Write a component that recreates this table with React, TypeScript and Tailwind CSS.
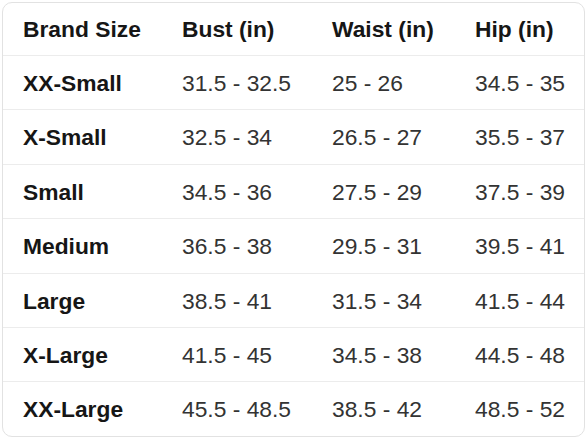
const headers = ["Brand Size", "Bust (in)", "Waist (in)", "Hip (in)"]

const rows = [
  ["XX-Small", "31.5 - 32.5", "25 - 26", "34.5 - 35"],
  ["X-Small", "32.5 - 34", "26.5 - 27", "35.5 - 37"],
  ["Small", "34.5 - 36", "27.5 - 29", "37.5 - 39"],
  ["Medium", "36.5 - 38", "29.5 - 31", "39.5 - 41"],
  ["Large", "38.5 - 41", "31.5 - 34", "41.5 - 44"],
  ["X-Large", "41.5 - 45", "34.5 - 38", "44.5 - 48"],
  ["XX-Large", "45.5 - 48.5", "38.5 - 42", "48.5 - 52"],
]

const cols = "grid grid-cols-[159px_150px_143px_1fr] items-center"

export default function App() {
  return (
    <div className="w-[588px] h-[441px] bg-white pl-[2px] pt-[2px] font-['Liberation_Sans',Arial,sans-serif]">
      <div className="w-[583px] rounded-[10px] border border-[#e2e2e2] overflow-hidden">
        {/* header */}
        <div className={`${cols} h-[52px] text-[22.8px] font-bold text-[#161616]`}>
          {headers.map((h) => (
            <div key={h} className="pl-5 pt-[1px]">
              {h}
            </div>
          ))}
        </div>
        {rows.map((r) => (
          <div key={r[0]} className={`${cols} h-[54.4px] border-t border-[#ececec] text-[22.8px] text-[#333]`}>
            <div className="pl-5 pt-[1px] font-bold text-[#161616]">{r[0]}</div>
            <div className="pl-5 pt-[1px]">{r[1]}</div>
            <div className="pl-5 pt-[1px]">{r[2]}</div>
            <div className="pl-5 pt-[1px]">{r[3]}</div>
          </div>
        ))}
      </div>
    </div>
  )
}
